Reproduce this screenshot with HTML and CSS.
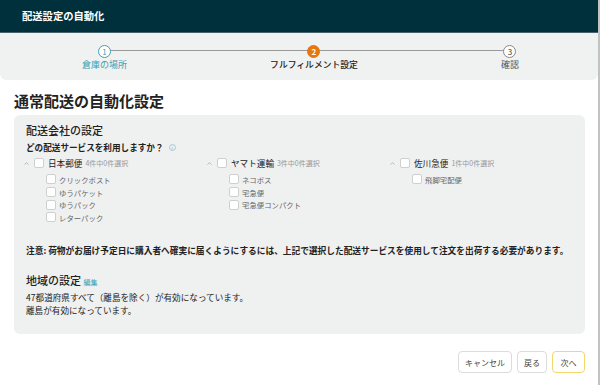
FILE: index.html
```html
<!DOCTYPE html>
<html lang="ja">

<head>
    <meta charset="UTF-8">
    <meta name="viewport" content="width=device-width, initial-scale=1.0">
    <title>配送設定の自動化</title>
    <link rel="stylesheet" href="styles.css">
</head>

<body>
    <div class="app">
        <header class="app-header">配送設定の自動化</header>

        <!-- ステップ表示 -->
        <nav class="stepper">
            <div class="step step-done">
                <span class="step-circle">1</span>
                <span class="step-label">倉庫の場所</span>
            </div>
            <div class="step step-current">
                <span class="step-circle">2</span>
                <span class="step-label">フルフィルメント設定</span>
            </div>
            <div class="step">
                <span class="step-circle">3</span>
                <span class="step-label">確認</span>
            </div>
        </nav>

        <main class="content">
            <h1 class="page-title">通常配送の自動化設定</h1>

            <section class="card">
                <h2 class="card-title">配送会社の設定</h2>
                <p class="question">どの配送サービスを利用しますか？
                    <span class="info-icon">i</span>
                </p>

                <div class="carriers">
                    <div class="carrier">
                        <div class="carrier-row">
                            <svg class="chevron" width="5" height="3" viewBox="0 0 5 3"><path d="M0.5 2.5 L2.5 0.7 L4.5 2.5" fill="none" stroke="#aaa" stroke-width="0.8"/></svg>
                            <span class="checkbox"></span>
                            <span class="carrier-name">日本郵便</span>
                            <span class="carrier-count">4件中0件選択</span>
                        </div>
                        <ul class="services">
                            <li><span class="checkbox"></span>クリックポスト</li>
                            <li><span class="checkbox"></span>ゆうパケット</li>
                            <li><span class="checkbox"></span>ゆうパック</li>
                            <li><span class="checkbox"></span>レターパック</li>
                        </ul>
                    </div>
                    <div class="carrier">
                        <div class="carrier-row">
                            <svg class="chevron" width="5" height="3" viewBox="0 0 5 3"><path d="M0.5 2.5 L2.5 0.7 L4.5 2.5" fill="none" stroke="#aaa" stroke-width="0.8"/></svg>
                            <span class="checkbox"></span>
                            <span class="carrier-name">ヤマト運輸</span>
                            <span class="carrier-count">3件中0件選択</span>
                        </div>
                        <ul class="services">
                            <li><span class="checkbox"></span>ネコポス</li>
                            <li><span class="checkbox"></span>宅急便</li>
                            <li><span class="checkbox"></span>宅急便コンパクト</li>
                        </ul>
                    </div>
                    <div class="carrier">
                        <div class="carrier-row">
                            <svg class="chevron" width="5" height="3" viewBox="0 0 5 3"><path d="M0.5 2.5 L2.5 0.7 L4.5 2.5" fill="none" stroke="#aaa" stroke-width="0.8"/></svg>
                            <span class="checkbox"></span>
                            <span class="carrier-name">佐川急便</span>
                            <span class="carrier-count">1件中0件選択</span>
                        </div>
                        <ul class="services">
                            <li><span class="checkbox"></span>飛脚宅配便</li>
                        </ul>
                    </div>
                </div>

                <p class="notice">注意: 荷物がお届け予定日に購入者へ確実に届くようにするには、上記で選択した配送サービスを使用して注文を出荷する必要があります。</p>

                <h2 class="card-title region-title">地域の設定 <a href="#" class="edit-link">編集</a></h2>
                <p class="region-text">47都道府県すべて（離島を除く）が有効になっています。</p>
                <p class="region-text">離島が有効になっています。</p>
            </section>

            <div class="actions">
                <button type="button" class="btn">キャンセル</button>
                <button type="button" class="btn">戻る</button>
                <button type="button" class="btn btn-next">次へ</button>
            </div>
        </main>
    </div>
</body>

</html>
```

FILE: styles.css
```css
:root {
    --header-bg: #00303b;
    --panel-bg: #eff0f0;
    --text-color: #222;
    --muted-color: #999;
    --teal: #3c9fb3;
    --orange: #e5770f;
    --border-color: #cfcfcf;
    --font-family: "Noto Sans CJK JP", "Noto Sans", sans-serif;
}

* {
    box-sizing: border-box;
}

body {
    margin: 0;
    font-family: var(--font-family);
    color: var(--text-color);
    background-color: #fff;
}

.app {
    width: 600px;
    height: 385px;
    border-right: 2px solid #c2c2c2;
    overflow: hidden;
}

.app-header {
    height: 33px;
    line-height: 32px;
    padding-left: 22px;
    background-color: var(--header-bg);
    border-bottom: 1px solid #46646b;
    color: #fff;
    font-size: 10.3px;
    font-weight: bold;
}

/* ステップ */
.stepper {
    position: relative;
    display: flex;
    justify-content: space-between;
    height: 47px;
    padding: 12px 79px 0 82px;
    background-color: #f0f1f1;
    border-radius: 0 0 6px 6px;
}

.stepper::before {
    content: "";
    position: absolute;
    top: 17px;
    left: 104px;
    right: 91px;
    height: 1px;
    background-color: #9a9a9a;
}

.step {
    position: relative;
    display: flex;
    flex-direction: column;
    align-items: center;
}

.step-circle {
    width: 13px;
    height: 13px;
    border-radius: 50%;
    border: 1px solid #888;
    background-color: #fff;
    font-size: 8px;
    line-height: 11px;
    text-align: center;
    color: #333;
}

.step-label {
    margin-top: 1px;
    font-size: 9px;
    line-height: 12px;
    color: #555;
}

.step-done .step-circle {
    border-color: var(--teal);
    color: var(--teal);
}

.step-done .step-label {
    color: var(--teal);
}

.step-current .step-circle {
    border-color: var(--orange);
    background-color: var(--orange);
    color: #fff;
    font-weight: bold;
}

.step-current .step-label {
    color: #222;
    font-size: 8.8px;
    font-weight: 500;
}

/* 本文 */
.content {
    padding: 0 13px 0 14px;
}

.page-title {
    margin: 11px 0 4px;
    font-size: 15px;
    line-height: 20px;
    font-weight: bold;
}

.card {
    background-color: var(--panel-bg);
    border-radius: 6px;
    padding: 8px 12px 17px;
}

.card-title {
    margin: 0;
    font-size: 11px;
    line-height: 14px;
    font-weight: 500;
}

.question {
    margin: 4px 0 0;
    font-size: 8.6px;
    line-height: 12px;
    font-weight: bold;
    display: flex;
    align-items: center;
}

.info-icon {
    width: 7px;
    height: 7px;
    margin-left: 5px;
    border: 1px solid #a9cbd8;
    border-radius: 50%;
    font-size: 5px;
    line-height: 5px;
    text-align: center;
    color: #a9cbd8;
}

.carriers {
    display: grid;
    grid-template-columns: 183px 183px 1fr;
    margin: 4px 0 0 -2px;
}

.carrier-row {
    display: flex;
    align-items: center;
    height: 12px;
}

.chevron {
    margin-right: 5px;
}

.checkbox {
    display: inline-block;
    width: 10px;
    height: 10px;
    background-color: #fff;
    border: 1px solid var(--border-color);
    border-radius: 2px;
    margin-right: 4px;
    flex-shrink: 0;
}

.carrier-name {
    font-size: 8.6px;
    color: #222;
}

.carrier-count {
    margin-left: 3px;
    font-size: 7px;
    color: var(--muted-color);
}

.services {
    list-style: none;
    margin: 4px 0 0;
    padding-left: 22px;
}

.services li {
    display: flex;
    align-items: center;
    height: 12.7px;
    font-size: 7.4px;
    color: #666;
}

.services .checkbox {
    margin-right: 3px;
}

.notice {
    margin: 21px 0 0;
    font-size: 8.7px;
    line-height: 12px;
    font-weight: bold;
    white-space: nowrap;
}

.region-title {
    margin-top: 16px;
}

.edit-link {
    font-size: 7px;
    color: var(--teal);
    text-decoration: none;
    font-weight: normal;
}

.region-text {
    margin: 0;
    font-size: 8.6px;
    line-height: 13px;
}

.region-title + .region-text {
    margin-top: 2.5px;
}

/* ボタン */
.actions {
    display: flex;
    justify-content: flex-end;
    gap: 5px;
    margin-top: 17px;
}

.btn {
    height: 22px;
    padding: 0 6px;
    background-color: #fff;
    border: 1px solid #dcdcdc;
    border-radius: 4px;
    font-family: var(--font-family);
    font-size: 8px;
    color: #444;
    cursor: pointer;
}

.btn-next {
    padding: 0 7.5px;
    border-color: #f3d76a;
}
```
